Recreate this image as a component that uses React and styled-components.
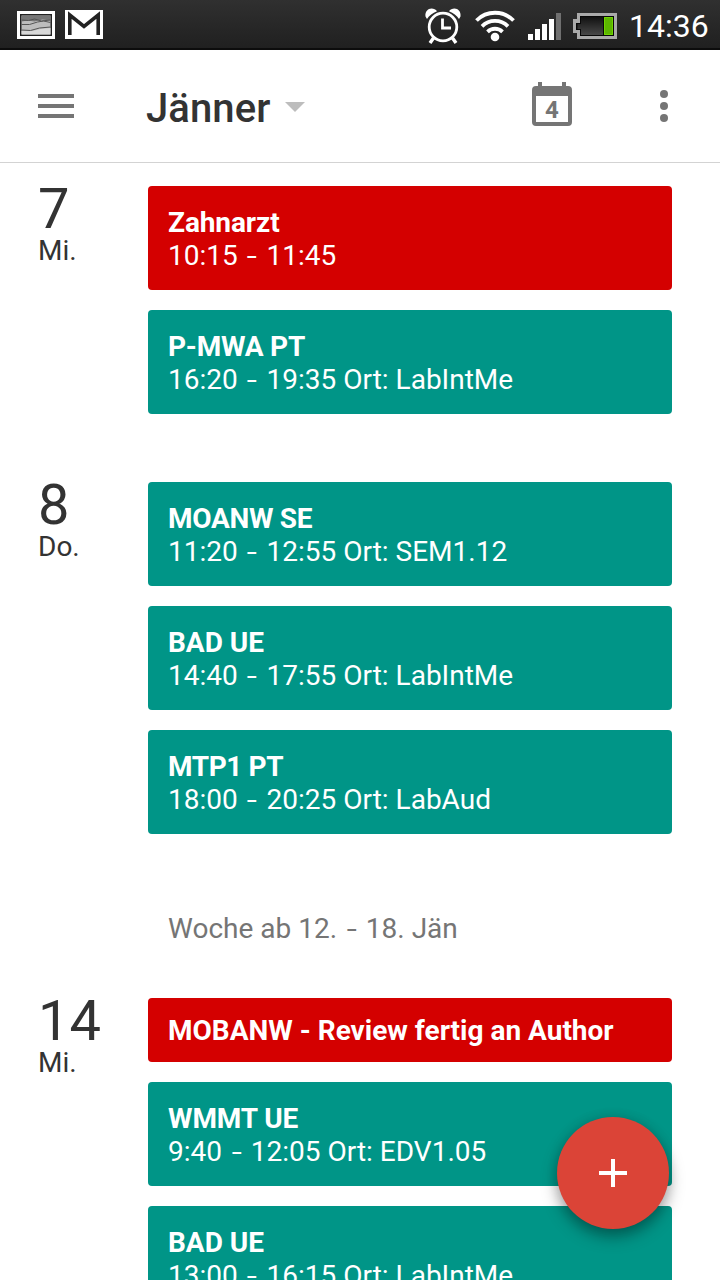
import React from 'react';
import styled, { createGlobalStyle } from 'styled-components';

const RED = '#d40000';
const GREEN = '#009587';

const days = [
  {
    number: '7',
    name: 'Mi.',
    events: [
      { title: 'Zahnarzt', details: '10:15 - 11:45', color: RED, tracking: -0.1 },
      { title: 'P-MWA PT', details: '16:20 - 19:35 Ort: LabIntMe', color: GREEN, tracking: -0.2 },
    ],
  },
  {
    number: '8',
    name: 'Do.',
    events: [
      { title: 'MOANW SE', details: '11:20 - 12:55 Ort: SEM1.12', color: GREEN, tracking: -0.3 },
      { title: 'BAD UE', details: '14:40 - 17:55 Ort: LabIntMe', color: GREEN },
      { title: 'MTP1 PT', details: '18:00 - 20:25 Ort: LabAud', color: GREEN, tracking: -0.4 },
    ],
  },
  {
    week: 'Woche ab 12. - 18. Jän',
    number: '14',
    name: 'Mi.',
    events: [
      { title: 'MOBANW - Review fertig an Author', color: RED },
      { title: 'WMMT UE', details: '9:40 - 12:05 Ort: EDV1.05', color: GREEN, tracking: -0.1 },
      { title: 'BAD UE', details: '13:00 - 16:15 Ort: LabIntMe', color: GREEN },
    ],
  },
];

const PictureIcon = () => (
  <svg width="38" height="28" viewBox="0 0 38 28">
    <rect width="38" height="28" fill="#fff" />
    <rect x="3" y="3" width="32" height="22" fill="#222" />
    <rect x="4.5" y="4.5" width="29" height="19" fill="#bdbdbd" />
    <path d="M4.5 4.5h29v5l-8-1-8 2-7-1-6 1z" fill="#777" />
    <path d="M4.5 20l11 0 8-2 10-1v6.5h-29z" fill="#d8d8d8" />
    <path d="M4.5 9l7 .5 6-1.5 7 2 9-1M4.5 13.5h8l8-2.5 6-1 7 1.5M4.5 19l9 .5 9-2.5 11-1" fill="none" stroke="#555" />
  </svg>
);

const MailIcon = () => (
  <svg width="38" height="29" viewBox="0 0 38 29">
    <rect width="38" height="29" fill="#fff" />
    <path d="M4.8 25V5L19 16.5 33.2 5v20" fill="none" stroke="#222" strokeWidth="3.6" />
  </svg>
);

const AlarmIcon = () => (
  <svg width="38" height="38" viewBox="0 0 38 38">
    <g fill="none" stroke="#fff">
      <circle cx="19" cy="20" r="13.8" strokeWidth="2.8" />
      <path d="M9.5 31l-3.5 5M28.5 31l3.500 5" strokeWidth="3.4" />
      <path d="M18.5 11.5V21H27" strokeWidth="2.8" />
    </g>
    <path d="M1.500 9.500C.8 4.500 4 1.500 7.500 1.500c2.200 0 4.400 1 5.500 2.800C8.500 6 5.300 8.500 3 12z" fill="#fff" />
    <path d="M36.500 9.500c.7-5-2.500-8-6-8-2.200 0-4.400 1-5.500 2.800 4.500 1.700 7.700 4.200 10 7.700z" fill="#fff" />
  </svg>
);

const WifiIcon = () => (
  <svg width="40" height="32" viewBox="0 0 40 32">
    <g fill="none" stroke="#fff" strokeWidth="3.8">
      <path d="M1.5 10.5a26 26 0 0 1 37 0" />
      <path d="M7 16.300a18.500 18.500 0 0 1 26 0" />
      <path d="M12.500 21.800a10.800 10.800 0 0 1 15 0" />
    </g>
    <circle cx="20" cy="27" r="4.3" fill="#fff" />
  </svg>
);

const SignalIcon = () => (
  <svg width="33" height="27" viewBox="0 0 33 27">
    <g fill="#fff">
      <rect y="21" width="5" height="6" />
      <rect x="7" y="16" width="5" height="11" />
      <rect x="14" y="11" width="5" height="16" />
      <rect x="21" y="6" width="5" height="21" />
    </g>
    <rect x="28" width="5" height="27" fill="#707070" />
  </svg>
);

const BatteryIcon = () => (
  <svg width="44" height="26" viewBox="0 0 44 26">
    <defs>
      <linearGradient id="cell" x1="0" y1="0" x2="0" y2="1">
        <stop offset="0" stopColor="#111" />
        <stop offset="1" stopColor="#484848" />
      </linearGradient>
    </defs>
    <path d="M4 0h40v26H4v-6H0V6h4z" fill="#aaa" />
    <path d="M7 3h34v20H7v-6H3V10h4z" fill="#080808" />
    <path d="M8 4h22v18H8v-6H4.500v-5H8z" fill="url(#cell)" />
    <rect x="31" y="4" width="9" height="18" fill="#5db600" />
    <path d="M31.500 4.500h8v17h-8z" fill="none" stroke="#71d600" />
  </svg>
);

const CalendarIcon = () => (
  <svg width="40" height="44" viewBox="0 0 40 44">
    <path
      fillRule="evenodd"
      d="M6 0h4v4h20V0h4v4h2a4 4 0 0 1 4 4v32a4 4 0 0 1-4 4H4a4 4 0 0 1-4-4V8a4 4 0 0 1 4-4h2zM4 14v26h32V14z"
      fill="#757575"
    />
  </svg>
);

const Range = ({ text }) => {
  const [from, to] = text.split(' - ');
  return <>{from} <Dash>-</Dash> {to}</>;
};

const EventCard = ({ event }) => (
  <Card $color={event.color} $single={!event.details}>
    <EventTitle $tracking={event.tracking}>{event.title}</EventTitle>
    {event.details && <EventDetails><Range text={event.details} /></EventDetails>}
  </Card>
);

const App = () => (
  <Screen>
    <GlobalStyle />
    <StatusBar>
      <Notifications>
        <PictureIcon />
        <MailIcon />
      </Notifications>
      <SystemIcons>
        <Connectivity>
          <AlarmIcon />
          <WifiIcon />
          <SignalIcon />
        </Connectivity>
        <BatteryIcon />
        <Clock>14:36</Clock>
      </SystemIcons>
    </StatusBar>
    <Header>
      <MenuButton aria-label="Menü">
        <MenuLine />
        <MenuLine />
        <MenuLine />
      </MenuButton>
      <Month>Jänner</Month>
      <Arrow />
      <TodayButton>
        <CalendarIcon />
        <TodayNumber>4</TodayNumber>
      </TodayButton>
      <MoreButton aria-label="Mehr">
        <Dot />
        <Dot />
        <Dot />
      </MoreButton>
    </Header>
    <Agenda>
      {days.map(day => (
        <React.Fragment key={day.number}>
          {day.week && <WeekLabel><Range text={day.week} /></WeekLabel>}
          <Day>
            <DateColumn>
              <DayNumber>{day.number}</DayNumber>
              <DayName>{day.name}</DayName>
            </DateColumn>
            <Events>
              {day.events.map(event => (
                <EventCard key={event.title} event={event} />
              ))}
            </Events>
          </Day>
        </React.Fragment>
      ))}
    </Agenda>
    <AddButton aria-label="Neuer Termin">
      <svg width="28" height="28" viewBox="0 0 28 28">
        <path d="M12 0h4v12h12v4H16v12h-4V16H0v-4h12z" fill="#fff" />
      </svg>
    </AddButton>
  </Screen>
);

const GlobalStyle = createGlobalStyle`
  * {
    box-sizing: border-box;
  }
  body {
    margin: 0;
    background: #FFF;
    font-family: Roboto, sans-serif;
  }
  svg {
    display: block;
    flex-shrink: 0;
  }
  button {
    padding: 0;
    border: 0;
    background: none;
    font: inherit;
    cursor: pointer;
  }
`;

const Screen = styled.div`
  position: relative;
  display: flex;
  flex-direction: column;
  width: 720px;
  height: 1280px;
  overflow: hidden;
  background: #FFF;
`;

const StatusBar = styled.div`
  display: flex;
  justify-content: space-between;
  flex-shrink: 0;
  height: 50px;
  padding: 0 12px 0 17px;
  background: linear-gradient(#303030, #202020);
  border-bottom: 2px solid #0c0c0c;
`;

const Notifications = styled.div`
  display: flex;
  align-items: center;
  gap: 10px;
  padding-top: 1px;
`;

const SystemIcons = styled.div`
  display: flex;
  align-items: center;
  gap: 12px;
  padding-top: 4px;
`;

const Connectivity = styled.div`
  display: flex;
  align-items: center;
  gap: 13px;
`;

const Clock = styled.div`
  width: 79px;
  color: #FFF;
  font-size: 32px;
  line-height: 38px;
`;

const Header = styled.div`
  display: flex;
  align-items: center;
  flex-shrink: 0;
  height: 113px;
  padding: 0 52px 0 38px;
  border-bottom: 1px solid #D3D3D3;
`;

const MenuButton = styled.button`
  display: flex;
  flex-direction: column;
  gap: 6px;
  width: 36px;
  margin-right: 72px;
`;

const MenuLine = styled.span`
  height: 4px;
  width: 100%;
  background: #757575;
`;

const Month = styled.div`
  padding-top: 5px;
  color: #333;
  font-size: 40px;
  font-weight: 500;
  line-height: 48px;
  letter-spacing: 0.1px;
`;

const Arrow = styled.div`
  margin: 2px auto 0 14px;
  border: 10px solid transparent;
  border-top-color: #BDBDBD;
  border-bottom: 0;
`;

const TodayButton = styled.button`
  position: relative;
  margin: 0 88px 4px 0;
`;

const TodayNumber = styled.span`
  position: absolute;
  top: 14px;
  left: 0;
  width: 40px;
  color: #757575;
  font-size: 24px;
  font-weight: 700;
  line-height: 28px;
  text-align: center;
`;

const MoreButton = styled.button`
  display: flex;
  flex-direction: column;
  gap: 4px;
`;

const Dot = styled.span`
  width: 8px;
  height: 8px;
  border-radius: 50%;
  background: #757575;
`;

const Agenda = styled.div`
  flex: 1;
  min-height: 0;
  padding-top: 23px;
  overflow: hidden;
`;

const Day = styled.div`
  display: flex;
  padding: 0 48px 0 38px;
  margin-bottom: 68px;
`;

const DateColumn = styled.div`
  width: 110px;
  margin-top: -1px;
  color: #333;
`;

const DayNumber = styled.div`
  font-size: 56px;
  line-height: 48px;
`;

const DayName = styled.div`
  font-size: 28px;
  line-height: 35px;
`;

const Events = styled.div`
  display: flex;
  flex-direction: column;
  flex: 1;
  gap: 20px;
`;

const Card = styled.div`
  height: ${props => props.$single ? 64 : 104}px;
  padding: ${props => props.$single ? 16 : 20}px 20px 0;
  border-radius: 4px;
  background: ${props => props.$color};
  color: #FFF;
  font-size: 28px;
  line-height: 33px;
  white-space: nowrap;
`;

const EventTitle = styled.div`
  font-weight: 700;
  letter-spacing: ${props => props.$tracking || 0}px;
`;

const EventDetails = styled.div``;

const Dash = styled.span`
  display: inline-block;
  margin: 0 3.6px;
  transform: scaleX(1.3);
`;

const WeekLabel = styled.div`
  height: 96px;
  padding: 10px 0 0 168px;
  color: #757575;
  font-size: 28px;
  line-height: 33px;
`;

const AddButton = styled.button`
  position: absolute;
  right: 51px;
  bottom: 51px;
  display: flex;
  align-items: center;
  justify-content: center;
  width: 112px;
  height: 112px;
  border-radius: 50%;
  background: #DB4437;
  box-shadow: 0 8px 16px rgba(0, 0, 0, 0.35), 0 0 12px rgba(0, 0, 0, 0.12);
`;

export default App;
